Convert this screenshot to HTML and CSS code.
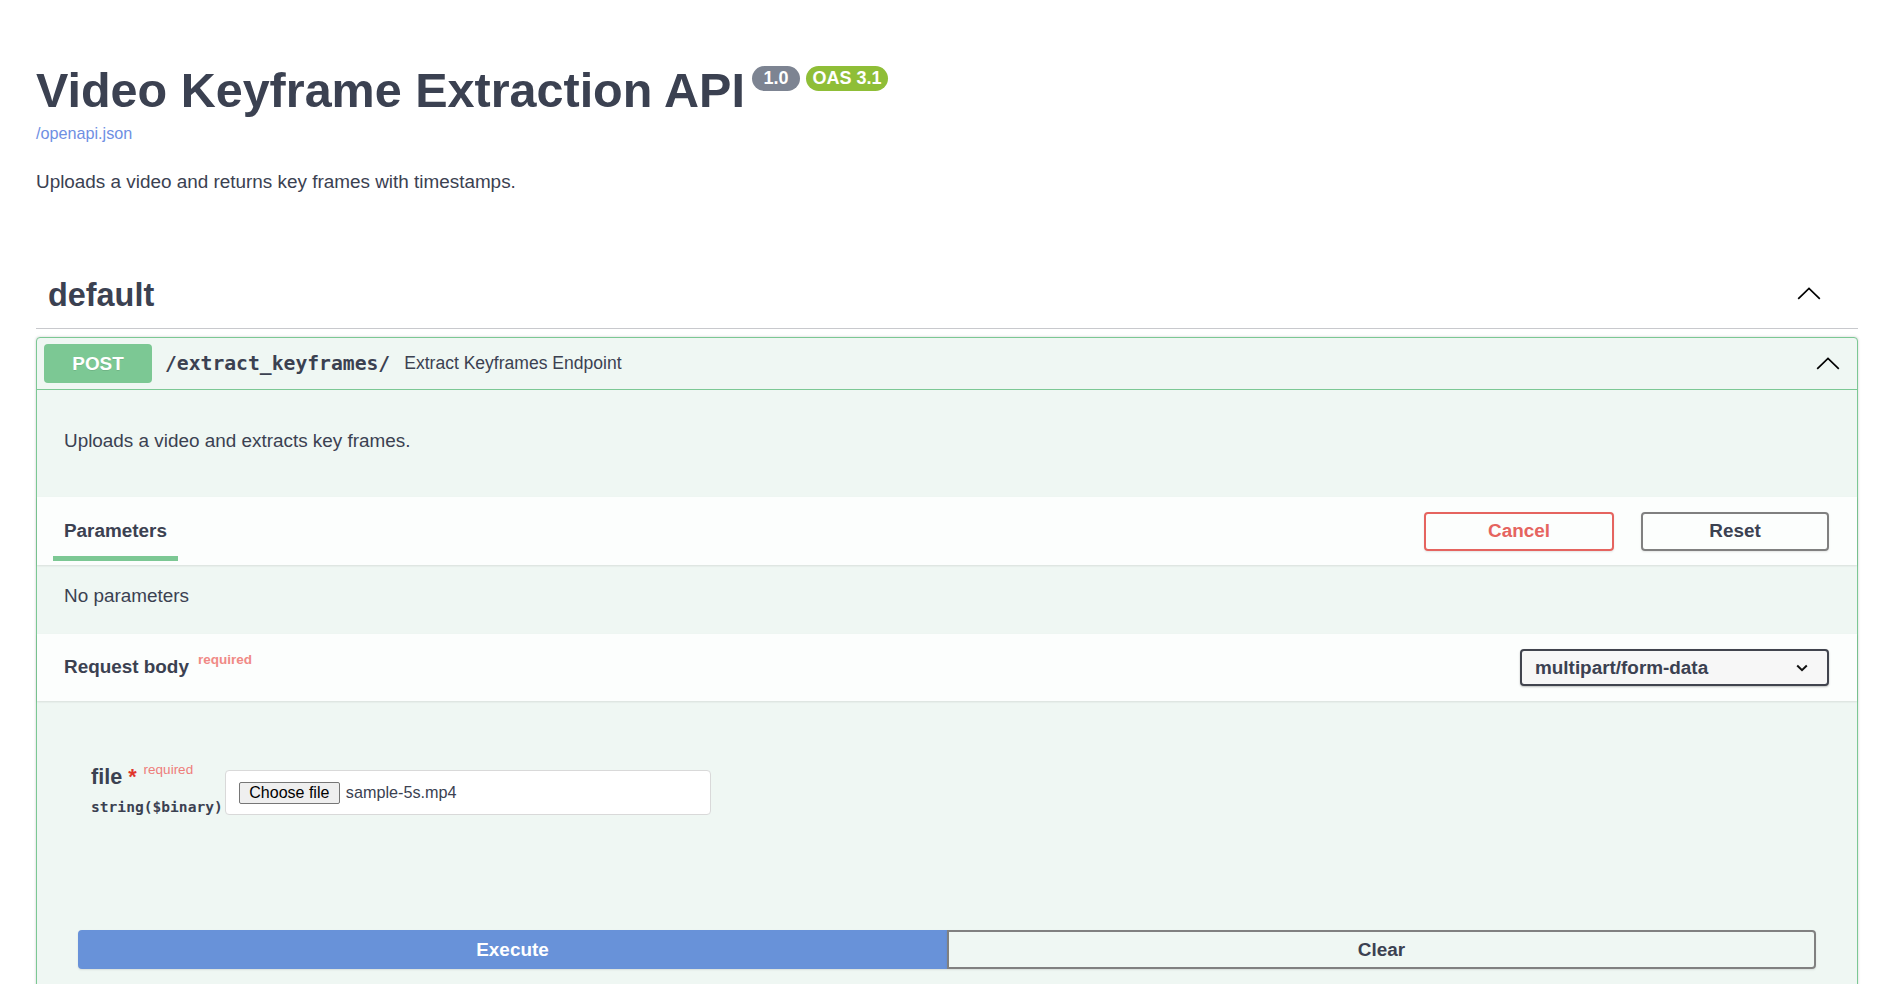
FILE: index.html
```html
<!DOCTYPE html>
<html lang="en">
<head>
<meta charset="utf-8">
<title>Video Keyframe Extraction API</title>
<link rel="stylesheet" href="styles.css">
</head>
<body>
<div class="wrapper">
  <section class="info">
    <h2 class="title"><span>Video Keyframe Extraction API</span><span class="badge badge-version">1.0</span><span class="badge badge-oas">OAS 3.1</span></h2>
    <a class="spec-link" href="#">/openapi.json</a>
    <p class="desc">Uploads a video and returns key frames with timestamps.</p>
  </section>

  <section class="tag">
    <div class="tag-header">
      <h3>default</h3>
      <svg class="chev" width="24" height="13" viewBox="0 0 24 13"><polyline points="1.2,11.8 12,1.4 22.8,11.8" fill="none" stroke="#000" stroke-width="1.7"/></svg>
    </div>

    <div class="opblock">
      <div class="op-summary">
        <span class="method">POST</span>
        <span class="path">/extract_keyframes/</span>
        <span class="summary">Extract Keyframes Endpoint</span>
        <svg class="chev op-chev" width="24" height="13" viewBox="0 0 24 13"><polyline points="1.2,11.8 12,1.4 22.8,11.8" fill="none" stroke="#000" stroke-width="1.7"/></svg>
      </div>

      <div class="op-desc"><p>Uploads a video and extracts key frames.</p></div>

      <div class="section-header">
        <div class="tab"><h4>Parameters</h4><span class="tab-line"></span></div>
        <div class="btns">
          <button class="btn cancel">Cancel</button>
          <button class="btn reset">Reset</button>
        </div>
      </div>

      <div class="no-params">No parameters</div>

      <div class="section-header body-header">
        <h4>Request body<span class="req">required</span></h4>
        <div class="select"><span>multipart/form-data</span><svg width="12" height="8" viewBox="0 0 12 8"><polyline points="1.2,1.5 6,6.2 10.8,1.5" fill="none" stroke="#111" stroke-width="2"/></svg></div>
      </div>

      <div class="body-content">
        <div class="param-row">
          <div class="param-name">
            <div class="name">file <span class="star">*</span><span class="req-light">required</span></div>
            <div class="type">string($binary)</div>
          </div>
          <div class="file-input"><span class="choose">Choose file</span><span class="fname">sample-5s.mp4</span></div>
        </div>
        <div class="execute-row">
          <button class="execute">Execute</button>
          <button class="clear">Clear</button>
        </div>
      </div>
    </div>
  </section>
</div>
</body>
</html>
```

FILE: styles.css
```css
* { box-sizing: border-box; }
html, body { margin: 0; padding: 0; }
body {
  font-family: "Liberation Sans", Arial, sans-serif;
  color: #3b4151;
  background: #fff;
  height: 100vh;
  overflow: hidden;
}
.wrapper { padding: 0 36px; }

/* info */
.info { padding-top: 62px; }
.title {
  margin: 0;
  display: flex;
  align-items: flex-start;
  font-size: 48.5px;
  line-height: 56px;
  font-weight: 700;
  color: #3b4151;
}
.badge {
  margin-top: 4px;
  height: 25px;
  line-height: 25px;
  border-radius: 57px;
  color: #fff;
  font-size: 18px;
  font-weight: 700;
}
.badge-version { margin-left: 7px; padding: 0 11.5px; background: #7d8492; }
.badge-oas { margin-left: 6px; padding: 0 6.5px; background: #8fbe37; }
.spec-link {
  display: block;
  margin-top: 6px;
  font-size: 16.2px;
  line-height: 18px;
  color: #6f8fe3;
  text-decoration: none;
}
.desc {
  margin: 29px 0 0;
  font-size: 18.9px;
  line-height: 22px;
}

/* tag */
.tag { margin-top: 69px; }
.tag-header {
  display: flex;
  align-items: center;
  justify-content: space-between;
  padding: 13px 37px 13px 12px;
  border-bottom: 1px solid #c8c9cd;
}
.tag-header h3 {
  margin: 0;
  font-size: 32.4px;
  line-height: 40px;
  font-weight: 700;
}
.chev { display: block; }
.tag-header .chev { margin-top: -3px; }

/* opblock */
.opblock {
  margin-top: 8px;
  border: 1px solid #7cc894;
  border-radius: 4px;
  background: #eff7f3;
  box-shadow: 0 0 3px rgba(0, 0, 0, .19);
}
.op-summary {
  display: flex;
  align-items: center;
  padding: 6px 17px 6px 7px;
  border-bottom: 1px solid #7cc894;
}
.method {
  width: 108px;
  height: 39px;
  line-height: 39px;
  text-align: center;
  background: #7cc894;
  color: #fff;
  font-size: 18.9px;
  font-weight: 700;
  border-radius: 4px;
  text-shadow: 0 1px 0 rgba(0, 0, 0, .1);
}
.path {
  margin-left: 13px;
  font-family: "DejaVu Sans Mono", "Liberation Mono", monospace;
  font-weight: 700;
  font-size: 19.7px;
  color: #3b4151;
}
.summary {
  margin-left: 14px;
  font-size: 17.55px;
}
.op-chev { margin-left: auto; }

.op-desc {
  height: 107px;
  padding: 39.5px 27px 0;
  font-size: 18.9px;
  line-height: 22px;
}
.op-desc p { margin: 0; }

.section-header {
  display: flex;
  align-items: center;
  height: 68px;
  padding: 0 28px 0 16px;
  background: rgba(255, 255, 255, .8);
  box-shadow: 0 1px 2px rgba(0, 0, 0, .1);
  position: relative;
}
.section-header h4 {
  margin: 0;
  font-size: 18.9px;
  line-height: 22px;
  font-weight: 700;
}
.tab {
  align-self: stretch;
  display: flex;
  flex-direction: column;
  padding: 22.5px 11px 0;
}
.tab-line {
  display: block;
  margin: 14.5px -11px 0;
  height: 5px;
  background: #7cc894;
}
.btns {
  margin-left: auto;
  display: flex;
  gap: 27px;
}
.btn {
  height: 39px;
  border: 2px solid #808080;
  border-radius: 4px;
  background: transparent;
  font-family: inherit;
  font-size: 18.9px;
  font-weight: 700;
  color: #3b4151;
  box-shadow: 0 1px 2px rgba(0, 0, 0, .1);
}
.cancel { width: 190px; border-color: #e5645f; color: #e5645f; }
.reset { width: 188px; }

.no-params {
  height: 69px;
  padding: 20px 27px 0;
  font-size: 18.9px;
  line-height: 22px;
}

.body-header { height: 67px; padding-left: 27px; }
.body-header h4 { margin-top: 1px; }
.req {
  position: relative;
  top: -9px;
  margin-left: 9px;
  font-size: 13.5px;
  font-weight: 700;
  color: #f08a86;
}
.select {
  margin-left: auto;
  width: 309px;
  height: 37px;
  border: 2px solid #41444e;
  border-radius: 4px;
  background: #f7f7f7;
  box-shadow: 0 1px 2px rgba(0, 0, 0, .25);
  display: flex;
  align-items: center;
  justify-content: space-between;
  padding: 0 19px 0 13px;
  font-size: 18.9px;
  font-weight: 700;
  color: #3b4151;
}

.body-content { padding: 64px 41px 40px; }
.param-row {
  display: flex;
  align-items: flex-start;
  padding-left: 13px;
}
.name {
  font-size: 21.6px;
  line-height: 24px;
  font-weight: 700;
  white-space: nowrap;
}
.star { color: #e0362c; }
.req-light {
  position: relative;
  top: -10px;
  margin-left: 7px;
  font-size: 13.5px;
  font-weight: 400;
  color: #ee7d7a;
}
.type {
  margin-top: 6px;
  font-family: "DejaVu Sans Mono", "Liberation Mono", monospace;
  font-weight: 700;
  font-size: 14.6px;
  line-height: 18px;
  color: #3b4151;
}
.file-input {
  margin: 5px 0 0 2px;
  width: 486px;
  height: 45px;
  background: #fff;
  border: 1px solid #d9d9d9;
  border-radius: 4px;
  display: flex;
  align-items: center;
  padding-left: 13px;
}
.choose {
  height: 22px;
  line-height: 20px;
  padding: 0 9.5px;
  font-size: 16px;
  border: 1px solid #767676;
  border-radius: 2px;
  background: #efefef;
  color: #000;
}
.fname {
  margin-left: 6px;
  font-size: 16.2px;
  color: #3b4151;
}

.execute-row {
  display: flex;
  margin-top: 114px;
}
.execute, .clear {
  flex: 1;
  height: 39px;
  font-family: inherit;
  font-size: 18.9px;
  font-weight: 700;
  box-shadow: 0 1px 2px rgba(0, 0, 0, .1);
}
.execute {
  background: #6892d9;
  border: 2px solid #6892d9;
  color: #fff;
  border-radius: 4px 0 0 4px;
}
.clear {
  background: transparent;
  border: 2px solid #808080;
  color: #3b4151;
  border-radius: 0 4px 4px 0;
}
```
